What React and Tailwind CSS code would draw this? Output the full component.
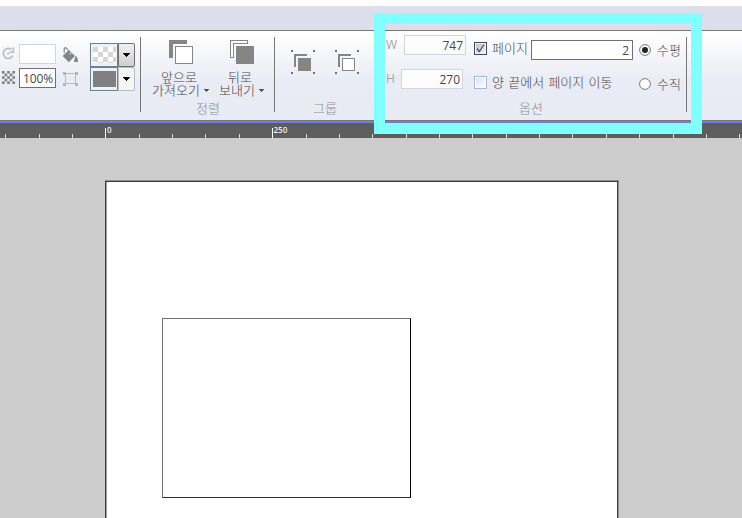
import React from "react";

const Separator = () => <div className="mt-[6px] h-[75px] w-px shrink-0 bg-[#777777]" />;

const Caret = ({ className = "" }) => (
  <svg className={"shrink-0 " + className} width="5" height="3" viewBox="0 0 5 3" shapeRendering="crispEdges">
    <path d="M0 0h5v1H4v1H3v1H2V2H1V1H0z" fill="#555" />
  </svg>
);

const RotateIcon = () => (
  <svg width="13" height="13" viewBox="0 0 13 13" fill="none">
    <path d="M9.6 2.6A5 5 0 1 0 10.8 8.6" stroke="#bcbec3" strokeWidth="1.7" />
    <path d="M11.4 0.5V5.2H6.8" stroke="#bcbec3" strokeWidth="1.6" />
    <rect x="5.2" y="6" width="2" height="1.6" fill="#bcbec3" />
  </svg>
);

const cells = [0, 1, 2, 3, 4];

const CheckerIcon = () => (
  <svg width="13" height="13" viewBox="0 0 13 13">
    {cells.map((r) =>
      cells.map((c) =>
        (r + c) % 2 === 0 ? (
          <rect key={r + "-" + c} x={c * 2.6} y={r * 2.6} width="2.6" height="2.6" fill="#808184" />
        ) : null
      )
    )}
  </svg>
);

const BucketIcon = () => (
  <svg width="17" height="16" viewBox="0 0 17 16">
    <path d="M6.8 3L13 9 6.8 15.2 0.6 9z" fill="#858585" />
    <path d="M2.2 5.8V1.4L3.8 0.6L8.7 6.4" fill="none" stroke="#858585" strokeWidth="1.2" />
    <path d="M3.6 4.4L5.8 3" stroke="#f8f8fb" strokeWidth="0.8" />
    <circle cx="8.4" cy="6.6" r="0.9" fill="#d7d8dc" />
    <path d="M13.6 8.6C15.2 10.2 16 12 16 15H12C12 12.6 13.2 11.4 13.6 8.6z" fill="#858585" />
  </svg>
);

const BoundsIcon = () => (
  <svg width="16" height="16" viewBox="0 0 16 16" shapeRendering="crispEdges">
    <path d="M2 1h1v14H2zM12 1h1v14h-1zM1 2h13v1H1zM1 12h13v1H1z" fill="#b9bac0" />
    <path d="M0 1h3v3H0zM12 1h3v3h-3zM0 12h3v3H0zM12 12h3v3h-3z" fill="#b5b6bb" />
  </svg>
);

const BringFrontIcon = () => (
  <svg width="24" height="24" viewBox="0 0 24 24" shapeRendering="crispEdges">
    <path d="M0 0H18V4H4V18H0z" fill="#858585" />
    <rect x="6.5" y="6.5" width="17" height="17" fill="#fff" stroke="#858585" />
  </svg>
);

const SendBackIcon = () => (
  <svg width="24" height="24" viewBox="0 0 24 24" shapeRendering="crispEdges">
    <path d="M0.5 0.5H17.5V3.5H3.5V17.5H0.5z" fill="#fff" stroke="#858585" />
    <rect x="6" y="6" width="18" height="18" fill="#858585" />
  </svg>
);

const GroupIcon = ({ filled }) => (
  <svg width="24" height="24" viewBox="0 0 24 24" shapeRendering="crispEdges">
    <path d="M0 0h2v2H0zM22 0h2v2h-2zM0 22h2v2H0zM22 22h2v2h-2z" fill="#707070" />
    <path d="M3 4H16V6H5V17H3z" fill="#858585" />
    <rect x="7.5" y="8.5" width="12" height="12" fill={filled ? "#858585" : "#fff"} stroke="#858585" />
  </svg>
);

const swatch = [0, 1, 2, 3];

const PatternSwatch = () => (
  <svg width="23" height="16" viewBox="0 0 23 16" shapeRendering="crispEdges">
    <rect width="23" height="16" fill="#fff" />
    {swatch.map((r) =>
      cells.map((c) =>
        (r + c) % 2 === 0 ? (
          <rect key={r + "-" + c} x={c * 5} y={r * 5} width="5" height="5" fill="#d6d6d6" />
        ) : null
      )
    )}
  </svg>
);

const Combo = ({ pressed, children }) => (
  <div className="flex h-[24px] w-[45px]">
    <div className="flex w-[28px] items-center justify-center border border-[#6d8291] bg-[#eef1f6]">{children}</div>
    <div
      className={
        "flex w-[17px] items-center justify-center rounded-r-[2px] border " +
        (pressed
          ? "border-[#707070] bg-linear-to-b from-[#f1f1f1] to-[#cfcfcf]"
          : "border-[#b5bcc4] bg-[#f5f5f6]")
      }
    >
      <svg width="7" height="4" viewBox="0 0 7 4" shapeRendering="crispEdges">
        <path d="M0 0H7V1H6V2H5V3H4V4H3V3H2V2H1V1H0z" fill="#000" />
      </svg>
    </div>
  </div>
);

const num = "font-['Open_Sans',sans-serif] text-[12px] ";
const Label = ({ children }) => (
  <span className="text-[13px] leading-[14px] font-light whitespace-nowrap [word-spacing:1.4px]">{children}</span>
);

const Caption = ({ children, className = "" }) => (
  <div className={"text-[13px] leading-[14px] font-light whitespace-nowrap text-[#8c8c90] " + className}>{children}</div>
);

const Radio = ({ checked }) => (
  <svg className="shrink-0" width="12" height="12" viewBox="0 0 12 12">
    <circle cx="6" cy="6" r="5.4" fill="#fff" stroke="#777" strokeWidth="1" />
    {checked && <circle cx="6" cy="6" r="3" fill="#222" />}
  </svg>
);

const Checkbox = ({ checked }) => (
  <div
    className={
      "flex size-[13px] shrink-0 items-center justify-center border p-px " +
      (checked ? "border-[#44475a] bg-[#f4f4f8]" : "border-[#abb5dc] bg-white")
    }
  >
    <div
      className={
        "size-[9px] bg-linear-to-br " + (checked ? "from-[#bfc1c9] to-[#f2f2f5]" : "from-[#dfe3f4] to-[#fafaff]")
      }
    >
      {checked && (
        <svg width="9" height="9" viewBox="0 0 9 9">
          <path d="M1 4.5L3.3 7.7L8 0.5" fill="none" stroke="#505055" strokeWidth="1.3" />
        </svg>
      )}
    </div>
  </div>
);

const ticks = Array.from({ length: 23 }, (_, i) => i - 3);

const Ruler = () => (
  <svg className="block shrink-0" width="742" height="15" viewBox="0 0 742 15">
    <rect width="742" height="15" fill="#5d5d5d" />
    {ticks.map((t) => {
      const major = t % 5 === 0 && t < 10;
      return (
        <rect
          key={t}
          x={Math.round(105.4 + t * 33.36)}
          y={major ? 5 : 11}
          width="1"
          height={major ? 10 : 4}
          fill={major ? "#fff" : "#dcdcdc"}
        />
      );
    })}
    <g fill="#f0f0f0" fontFamily="'Open Sans', sans-serif" fontSize="8" fontWeight="600">
      <text x="107" y="10">0</text>
      <text x="273.5" y="10">250</text>
    </g>
  </svg>
);

export default function App() {
  return (
    <div className="relative flex h-[518px] w-[742px] flex-col overflow-hidden bg-[#cccccc] font-['Noto_Sans_CJK_KR',sans-serif] text-[#484848]">
      <div className="h-[6px] shrink-0 bg-white" />
      <div className="h-[24px] shrink-0 bg-[#dcdfeb]" />
      <div className="flex h-[91px] shrink-0 border-y border-[#777777] bg-linear-to-b from-white via-[#eaecf5] via-55% to-[#e9ebf4]">
        <div className="flex w-[140px] shrink-0 pt-[12px] pl-[2px]">
          <div className="flex w-[17px] flex-col gap-[11px] pt-[4px]">
            <RotateIcon />
            <CheckerIcon />
          </div>
          <div className="flex w-[43px] flex-col gap-[4px] pt-[1px]">
            <div className="h-[20px] w-[37px] border border-[#d0d5de] bg-white" />
            <div
              className={
                num +
                "flex h-[20px] w-[37px] items-center border border-[#707070] bg-white pt-px pl-[3px] tracking-[-0.1px]"
              }
            >
              100%
            </div>
          </div>
          <div className="flex w-[28px] flex-col gap-[8px] pt-[4px]">
            <BucketIcon />
            <div className="pl-px">
              <BoundsIcon />
            </div>
          </div>
          <div className="flex flex-col">
            <Combo pressed>
              <PatternSwatch />
            </Combo>
            <Combo>
              <div className="h-[16px] w-[23px] bg-[#808080]" />
            </Combo>
          </div>
        </div>
        <Separator />
        <div className="flex w-[133px] shrink-0 flex-col pt-[9px]">
          <div className="flex pl-[11px] font-light">
            <div className="flex w-[67px] flex-col">
              <div className="pl-[17px]">
                <BringFrontIcon />
              </div>
              <div className="mt-[6px] pl-[9px] text-[13px] leading-[13px]">앞으로</div>
              <div className="flex items-center gap-[4px] text-[13px] leading-[13px] whitespace-nowrap">
                가져오기
                <Caret className="mt-[2px]" />
              </div>
            </div>
            <div className="flex flex-col">
              <div className="pl-[11px]">
                <SendBackIcon />
              </div>
              <div className="mt-[6px] pl-[9px] text-[13px] leading-[13px]">뒤로</div>
              <div className="flex items-center gap-[4px] text-[13px] leading-[13px] whitespace-nowrap">
                보내기
                <Caret className="mt-[2px]" />
              </div>
            </div>
          </div>
          <Caption className="mt-[5px] pl-[55px]">정렬</Caption>
        </div>
        <Separator />
        <div className="flex w-[110px] shrink-0 flex-col pt-[19px] pl-[16px]">
          <div className="flex gap-[20px]">
            <GroupIcon filled />
            <GroupIcon />
          </div>
          <Caption className="mt-[27px] pl-[22px]">그룹</Caption>
        </div>
        <div className="flex w-[301px] shrink-0 flex-col">
          <div className="flex h-[36px] items-start pt-[4px]">
            <span className={num + "mt-[1px] w-[19px] pl-[1px] leading-[18px] text-[#a5a5a8]"}>W</span>
            <div
              className={
                num +
                "flex h-[20px] w-[62px] items-center justify-end border border-[#d0d5de] bg-[#fcfcfd] pt-px pr-[2px]"
              }
            >
              747
            </div>
            <div className="mt-[7px] ml-[8px] flex">
              <Checkbox checked />
            </div>
            <div className="mt-[6px] ml-[5px] flex w-[39px]">
              <Label>페이지</Label>
            </div>
            <div
              className={
                num +
                "mt-[5px] flex h-[20px] w-[102px] items-center justify-end border border-[#707070] bg-white pt-px pr-[3px]"
              }
            >
              2
            </div>
            <div className="mt-[8px] ml-[6px] flex items-center gap-[6px]">
              <Radio checked />
              <Label>수평</Label>
            </div>
          </div>
          <div className="flex h-[34px] items-start pt-[2px]">
            <span className={num + "mt-[1px] w-[16px] pl-[1px] leading-[18px] text-[#a5a5a8]"}>H</span>
            <div
              className={
                num +
                "flex h-[20px] w-[62px] items-center justify-end border border-[#d0d5de] bg-[#fcfcfd] pt-px pr-[2px]"
              }
            >
              270
            </div>
            <div className="mt-[7px] ml-[11px] flex">
              <Checkbox />
            </div>
            <div className="mt-[6px] ml-[5px] flex w-[147px]">
              <Label>양 끝에서 페이지 이동</Label>
            </div>
            <div className="mt-[8px] flex items-center gap-[6px]">
              <Radio />
              <Label>수직</Label>
            </div>
          </div>
          <Caption className="pl-[134px]">옵션</Caption>
        </div>
        <Separator />
      </div>
      <div className="h-[2px] shrink-0 bg-[#747ce0]" />
      <Ruler />
      <div className="flex flex-1 pt-[42px] pl-[105px]">
        <div className="h-[338px] w-[514px] border-t border-r border-[#8d8d8d]">
          <div className="h-full border-t border-r border-l border-[#3c3c3c] bg-white pt-[136px] pl-[56px] shadow-[inset_1px_0_0_#a0a0a0]">
            <div className="h-[180px] w-[249px] border border-t-[#707070] border-r-black border-b-[#303030] border-l-[#707070] bg-white" />
          </div>
        </div>
      </div>
      <div className="absolute top-[13px] left-[374px] h-[121px] w-[328px] border-[11px] border-[#80ffff]" />
    </div>
  );
}
